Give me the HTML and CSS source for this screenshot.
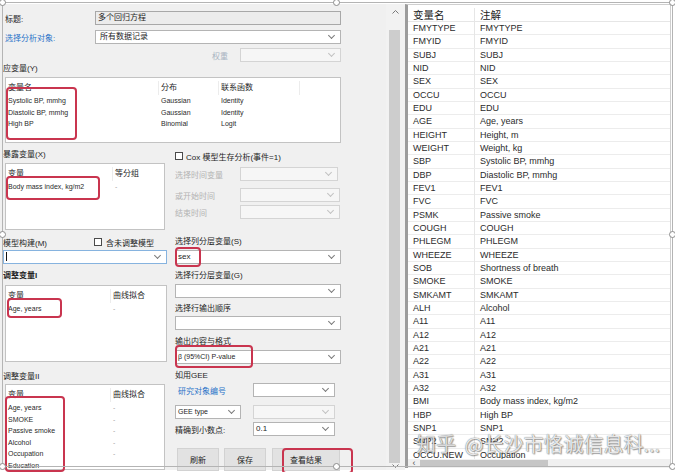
FILE: index.html
```html
<!DOCTYPE html>
<html>

<head>
    <title>多个回归方程</title>
    <link rel="stylesheet" href="styles.css">
</head>

<body>
    <div class="window">
        <!-- settings form -->
        <div class="form">
            <div class="field-row">
                <label>标题:</label>
                <div class="control readonly">多个回归方程</div>
            </div>
            <div class="field-row">
                <label class="link">选择分析对象:</label>
                <div class="control select pad">所有数据记录</div>
            </div>
            <div class="weight-row">
                <label class="muted-blue">权重</label>
                <div class="control select disabled w-weight"></div>
            </div>

            <div class="caption cap-y">应变量(Y)</div>
            <div class="listbox box-y">
                <div class="list-head"><span>变量名</span><span>分布</span><span>联系函数</span><span></span></div>
                <div class="list-row"><span>Systolic BP, mmhg</span><span>Gaussian</span><span>Identity</span><span></span></div>
                <div class="list-row"><span>Diastolic BP, mmhg</span><span>Gaussian</span><span>Identity</span><span></span></div>
                <div class="list-row"><span>High BP</span><span>Binomial</span><span>Logit</span><span></span></div>
                <div class="mark mark-y"></div>
            </div>

            <div class="cols">
                <div class="col-left">
                    <div class="caption cap-x">暴露变量(X)</div>
                    <div class="listbox box-x">
                        <div class="list-head"><span>变量</span><span>等分组</span></div>
                        <div class="list-row"><span>Body mass index, kg/m2</span><span class="dash">-</span></div>
                        <div class="mark mark-x"></div>
                    </div>

                    <div class="model-row">
                        <span class="model-label">模型构建(M)</span>
                        <span class="check"></span>
                        <span>含未调整模型</span>
                    </div>
                    <div class="control select focus model-select"><span class="caret"></span></div>

                    <div class="caption cap-adj1">调整变量I</div>
                    <div class="listbox box-adj1">
                        <div class="list-head"><span>变量</span><span>曲线拟合</span></div>
                        <div class="list-row"><span>Age, years</span><span class="dash">-</span></div>
                        <div class="mark mark-a1"></div>
                    </div>

                    <div class="caption cap-adj2">调整变量II</div>
                    <div class="listbox box-adj2">
                        <div class="list-head"><span>变量</span><span>曲线拟合</span></div>
                        <div class="list-row"><span>Age, years</span><span class="dash">-</span></div>
                        <div class="list-row"><span>SMOKE</span><span class="dash">-</span></div>
                        <div class="list-row"><span>Passive smoke</span><span class="dash">-</span></div>
                        <div class="list-row"><span>Alcohol</span><span class="dash">-</span></div>
                        <div class="list-row"><span>Occupation</span><span class="dash">-</span></div>
                        <div class="list-row"><span>Education</span><span class="dash">-</span></div>
                        <div class="mark mark-a2"></div>
                    </div>
                </div>

                <div class="col-right">
                    <div class="cox-row">
                        <span class="check"></span>
                        <span>Cox 模型生存分析(事件=1)</span>
                    </div>
                    <div class="time-row t1">
                        <label class="muted">选择时间变量</label>
                        <div class="control select disabled"></div>
                    </div>
                    <div class="time-row t2">
                        <label class="muted">或开始时间</label>
                        <div class="control select disabled"></div>
                    </div>
                    <div class="time-row t3">
                        <label class="muted">结束时间</label>
                        <div class="control select disabled"></div>
                    </div>

                    <div class="caption cap-s">选择列分层变量(S)</div>
                    <div class="control select wide sel-s">sex<div class="mark mark-sex"></div></div>

                    <div class="caption cap-g">选择行分层变量(G)</div>
                    <div class="control select wide sel-g"></div>

                    <div class="caption cap-order">选择行输出顺序</div>
                    <div class="control select wide sel-order"></div>

                    <div class="caption cap-out">输出内容与格式</div>
                    <div class="control select wide sel-out">β (95%CI) P-value<div class="mark mark-out"></div></div>

                    <div class="caption cap-gee">如用GEE</div>
                    <div class="gee-row g1">
                        <label class="link id-label">研究对象编号</label>
                        <div class="control select short"></div>
                    </div>
                    <div class="gee-row g2">
                        <div class="control select gee-type">GEE type</div>
                        <div class="control select short disabled"></div>
                    </div>
                    <div class="gee-row g3">
                        <label>精确到小数点:</label>
                        <div class="control select short">0.1</div>
                    </div>

                    <div class="buttons">
                        <button class="btn btn-small">刷新</button>
                        <button class="btn btn-small">保存</button>
                        <button class="btn btn-wide">查看结果</button>
                        <div class="mark mark-btn"></div>
                    </div>
                </div>
            </div>
        </div>

        <!-- form scrollbar -->
        <div class="vscroll">
            <svg class="arrow-up" width="7" height="4" viewBox="0 0 7 4"><polyline points="0.5,3.5 3.5,0.5 6.5,3.5" fill="none" stroke="#777" stroke-width="1"/></svg>
            <div class="vthumb"></div>
            <svg class="arrow-down" width="7" height="4" viewBox="0 0 7 4"><polyline points="0.5,0.5 3.5,3.5 6.5,0.5" fill="none" stroke="#777" stroke-width="1"/></svg>
        </div>

        <!-- variable list -->
        <div class="vars">
            <div class="var-table">
                <div class="var-head"><span>变量名</span><span>注解</span></div>
                <div id="var-rows"></div>
            </div>
            <div class="hscroll">
                <span class="harrow">&lsaquo;</span>
                <div class="hthumb"></div>
            </div>
            <div class="watermark"><span class="wm-brand">知乎</span> @长沙市恪诚信息科...</div>
        </div>
    </div>

    <!-- picture frame handles -->
    <div class="frame">
        <span class="handle h-tl"></span>
        <span class="handle h-tm"></span>
        <span class="handle h-tr"></span>
        <span class="handle h-ml"></span>
        <span class="handle h-mr"></span>
        <span class="handle h-bl"></span>
        <span class="handle h-bm"></span>
        <span class="handle h-br"></span>
    </div>

    <script>
        const vars = [
            ['FMYTYPE', 'FMYTYPE'], ['FMYID', 'FMYID'], ['SUBJ', 'SUBJ'], ['NID', 'NID'],
            ['SEX', 'SEX'], ['OCCU', 'OCCU'], ['EDU', 'EDU'], ['AGE', 'Age, years'],
            ['HEIGHT', 'Height, m'], ['WEIGHT', 'Weight, kg'], ['SBP', 'Systolic BP, mmhg'],
            ['DBP', 'Diastolic BP, mmhg'], ['FEV1', 'FEV1'], ['FVC', 'FVC'],
            ['PSMK', 'Passive smoke'], ['COUGH', 'COUGH'], ['PHLEGM', 'PHLEGM'],
            ['WHEEZE', 'WHEEZE'], ['SOB', 'Shortness of breath'], ['SMOKE', 'SMOKE'],
            ['SMKAMT', 'SMKAMT'], ['ALH', 'Alcohol'], ['A11', 'A11'], ['A12', 'A12'],
            ['A21', 'A21'], ['A22', 'A22'], ['A31', 'A31'], ['A32', 'A32'],
            ['BMI', 'Body mass index, kg/m2'], ['HBP', 'High BP'], ['SNP1', 'SNP1'],
            ['SNP2', 'SNP2'], ['OCCU.NEW', 'Occupation']
        ];

        const rows = document.getElementById('var-rows');
        for (const [name, note] of vars) {
            const row = document.createElement('div');
            row.className = 'var-row';
            row.innerHTML = `<span>${name}</span><span>${note}</span>`;
            rows.appendChild(row);
        }
    </script>
</body>

</html>
```

FILE: styles.css
```css
body {
    margin: 0;
    width: 675px;
    height: 472px;
    overflow: hidden;
    position: relative;
    background-color: #fff;
    font-family: "Liberation Sans", "Noto Sans CJK SC", sans-serif;
    font-size: 8px;
    color: #1e1e1e;
}

.window {
    display: flex;
    margin-top: 4px;
    height: 466px;
}

/* ---------- form ---------- */

.form {
    width: 386px;
    box-sizing: border-box;
    padding: 7px 45px 0 3px;
    background-color: #f0f0f0;
}

.field-row {
    display: grid;
    grid-template-columns: 92px 1fr;
    align-items: center;
    height: 14px;
}

.field-row + .field-row {
    margin-top: 5px;
}

.field-row label {
    padding-left: 2px;
}

.link {
    color: #2a73c8;
}

.muted {
    color: #b3b3b3;
}

.muted-blue {
    color: #a9b4c2;
}

.weight-row {
    display: flex;
    justify-content: flex-end;
    align-items: center;
    gap: 12px;
    height: 14px;
    margin-top: 4px;
}

.w-weight {
    width: 101px;
}

.control {
    position: relative;
    height: 14px;
    box-sizing: border-box;
    border: 1px solid #b4b4b4;
    background-color: #fff;
    padding: 0 2px;
    line-height: 12px;
    white-space: nowrap;
}

.control.pad {
    padding-left: 4px;
}

.readonly {
    background-color: #ececec;
    border-color: #a8a8a8;
}

.select::after {
    content: "";
    position: absolute;
    right: 6px;
    top: 2px;
    width: 4px;
    height: 4px;
    border-right: 1px solid #7a7a7a;
    border-bottom: 1px solid #7a7a7a;
    transform: rotate(45deg);
}

.disabled {
    background-color: #f6f6f6;
    border-color: #d4d4d4;
}

.disabled::after {
    border-color: #c2c2c2;
}

.focus {
    border-color: #86b3df;
}

.caret {
    display: inline-block;
    width: 1px;
    height: 9px;
    margin-top: 1px;
    background-color: #111;
    vertical-align: top;
}

.caption {
    height: 10px;
    line-height: 10px;
}

.cap-y {
    margin-top: 2px;
}

/* list boxes */

.listbox {
    position: relative;
    box-sizing: border-box;
    margin-left: 2px;
    padding-top: 3px;
    background-color: #fff;
    border: 1px solid #c3c3c3;
}

.list-head,
.list-row {
    display: grid;
}

.list-head {
    height: 14px;
    line-height: 13px;
}

.list-head span {
    padding-left: 2px;
    border-right: 1px solid #ececec;
}

.list-head span:last-child {
    border-right: none;
}

.list-row {
    height: 11.5px;
    line-height: 11.5px;
    font-size: 7px;
    color: #2b2b2b;
}

.list-row span {
    padding-left: 2px;
    white-space: nowrap;
}

.dash {
    color: #a5a5a5;
}

.box-y {
    margin-top: 3px;
    height: 66px;
    width: 336px;
}

.box-y .list-head,
.box-y .list-row {
    grid-template-columns: 153px 60px 81px 1fr;
}

.mark {
    position: absolute;
    box-sizing: border-box;
    border: 2px solid #c9354f;
    border-radius: 4px;
    pointer-events: none;
}

.mark-y {
    left: 0;
    top: 9px;
    width: 71px;
    height: 53px;
}

/* two column area */

.cols {
    display: flex;
    gap: 8px;
}

.col-left {
    width: 164px;
}

.col-right {
    width: 166px;
}

.cap-x {
    margin-top: 7px;
}

.box-x {
    margin-top: 3px;
    height: 67px;
    width: 160px;
}

.box-x .list-head,
.box-x .list-row {
    grid-template-columns: 107px 1fr;
}

.mark-x {
    left: 0;
    top: 12px;
    width: 94px;
    height: 24px;
}

.model-row {
    display: flex;
    align-items: center;
    height: 10px;
    margin-top: 7px;
}

.model-label {
    width: 91px;
}

.check {
    display: inline-block;
    width: 8px;
    height: 8px;
    box-sizing: border-box;
    border: 1px solid #4a4a4a;
    background-color: #fff;
    margin-right: 4px;
}

.model-select {
    margin-top: 3px;
    height: 14px;
}

.cap-adj1 {
    margin-top: 7px;
    font-weight: bold;
}

.box-adj1 {
    margin-top: 4px;
    height: 77px;
    width: 162px;
}

.box-adj1 .list-head,
.box-adj1 .list-row,
.box-adj2 .list-head,
.box-adj2 .list-row {
    grid-template-columns: 105px 1fr;
}

.mark-a1 {
    left: 1px;
    top: 12px;
    width: 55px;
    height: 20px;
}

.cap-adj2 {
    margin-top: 10px;
}

.box-adj2 {
    margin-top: 2px;
    height: 86px;
    width: 160px;
}

.mark-a2 {
    left: -1px;
    top: 11px;
    width: 60px;
    height: 76px;
}

/* right column */

.cox-row {
    display: flex;
    align-items: center;
    height: 10px;
    margin-top: 8px;
}

.cox-row .check {
    margin-right: 3px;
}

.time-row {
    display: grid;
    grid-template-columns: 65px 100px;
    align-items: center;
    height: 14px;
}

.t1 {
    margin-top: 6px;
}

.t1 .control {
    width: 98px;
}

.t2 {
    margin-top: 7px;
}

.t3 {
    margin-top: 3px;
}

.wide {
    width: 166px;
}

.cap-s {
    margin-top: 18px;
}

.sel-s,
.sel-g,
.sel-out {
    margin-top: 3px;
}

.mark-sex {
    left: -1px;
    top: -4px;
    width: 26px;
    height: 20px;
}

.cap-g,
.cap-out,
.cap-gee {
    margin-top: 7px;
}

.cap-order {
    margin-top: 6px;
}

.sel-order {
    margin-top: 2px;
}

.sel-out {
    font-size: 7px;
}

.mark-out {
    left: -1px;
    top: -6px;
    width: 78px;
    height: 23px;
}

.gee-row {
    display: flex;
    align-items: center;
    justify-content: space-between;
    width: 160px;
    height: 14px;
}

.g1 {
    margin-top: 2px;
}

.g2 {
    margin-top: 8px;
}

.g3 {
    margin-top: 3px;
}

.id-label {
    padding-left: 3px;
}

.short {
    width: 82px;
}

.gee-type {
    width: 66px;
    font-size: 7px;
}

.buttons {
    position: relative;
    display: flex;
    height: 23px;
    margin-top: 12px;
    padding-left: 2px;
}

.btn {
    height: 23px;
    margin: 0;
    border: 1px solid #d2d2d2;
    background-color: #e2e2e2;
    font-family: "Liberation Sans", "Noto Sans CJK SC", sans-serif;
    font-size: 8px;
    color: #1e1e1e;
    padding: 0;
}

.btn-small {
    width: 42px;
    margin-right: 5px;
}

.btn-wide {
    width: 68px;
    margin-left: 1px;
}

.mark-btn {
    left: 107px;
    top: 0;
    width: 71px;
    height: 26px;
}

/* ---------- scrollbar of the form ---------- */

.vscroll {
    display: flex;
    flex-direction: column;
    align-items: center;
    width: 19px;
    background-color: #f2f2f2;
}

.arrow-up {
    margin-top: 6px;
}

.vthumb {
    width: 11px;
    height: 433px;
    margin-top: 16px;
    margin-right: 3px;
    background-color: #cdcdcd;
}

.arrow-down {
    margin-top: 1px;
}

/* ---------- variable list ---------- */

.vars {
    position: relative;
    display: flex;
    flex-direction: column;
    width: 266px;
    height: 464px;
    box-sizing: border-box;
    border-left: 3px solid #9c9c9c;
    border-top: 1px solid #cfcfcf;
    border-right: 1px solid #cfcfcf;
    background-color: #fff;
}

.var-table {
    flex: 1;
    overflow: hidden;
}

.var-head,
.var-row {
    display: grid;
    grid-template-columns: 67px 1fr;
}

.var-head {
    height: 17px;
    padding-top: 3px;
    box-sizing: border-box;
    line-height: 14px;
    font-size: 10.5px;
    color: #222;
    border-bottom: 1px solid #e6e6e6;
}

.var-row {
    height: 13.33px;
    box-sizing: border-box;
    line-height: 13px;
    font-size: 9px;
    color: #2b2b2b;
    border-bottom: 1px solid #ececec;
}

.var-head span,
.var-row span {
    padding-left: 5px;
    white-space: nowrap;
}

.var-head span:first-child,
.var-row span:first-child {
    border-right: 1px solid #e6e6e6;
}

.hscroll {
    display: flex;
    align-items: center;
    height: 9px;
    background-color: #f0f0f0;
}

.harrow {
    width: 12px;
    text-align: center;
    font-size: 9px;
    line-height: 9px;
    color: #555;
}

.hthumb {
    width: 128px;
    height: 7px;
    background-color: #c6c6c6;
}

.watermark {
    position: absolute;
    left: 8px;
    top: 427px;
    font-family: "Noto Sans CJK SC", sans-serif;
    font-size: 20px;
    line-height: 24px;
    white-space: nowrap;
    color: rgba(255, 255, 255, 0.85);
    text-shadow: 0 0 1px #555, 1px 1px 1px rgba(0, 0, 0, 0.35);
}

.wm-brand {
    color: rgba(235, 235, 235, 0.9);
    margin-right: 4px;
}

/* ---------- frame with sizing handles ---------- */

.frame {
    position: absolute;
    left: 2px;
    top: 2px;
    width: 671px;
    height: 465px;
    box-sizing: border-box;
    border: 1px solid #b4b4b4;
    pointer-events: none;
}

.handle {
    position: absolute;
    width: 7px;
    height: 7px;
    box-sizing: border-box;
    border: 1px solid #8c8c8c;
    border-radius: 50%;
    background-color: #fff;
}

.h-tl { left: -4px; top: -4px; }
.h-tm { left: 330px; top: -4px; }
.h-tr { right: -4px; top: -4px; }
.h-ml { left: -4px; top: 228px; }
.h-mr { right: -4px; top: 228px; }
.h-bl { left: -4px; bottom: -4px; }
.h-bm { left: 330px; bottom: -4px; }
.h-br { right: -4px; bottom: -4px; }
```
